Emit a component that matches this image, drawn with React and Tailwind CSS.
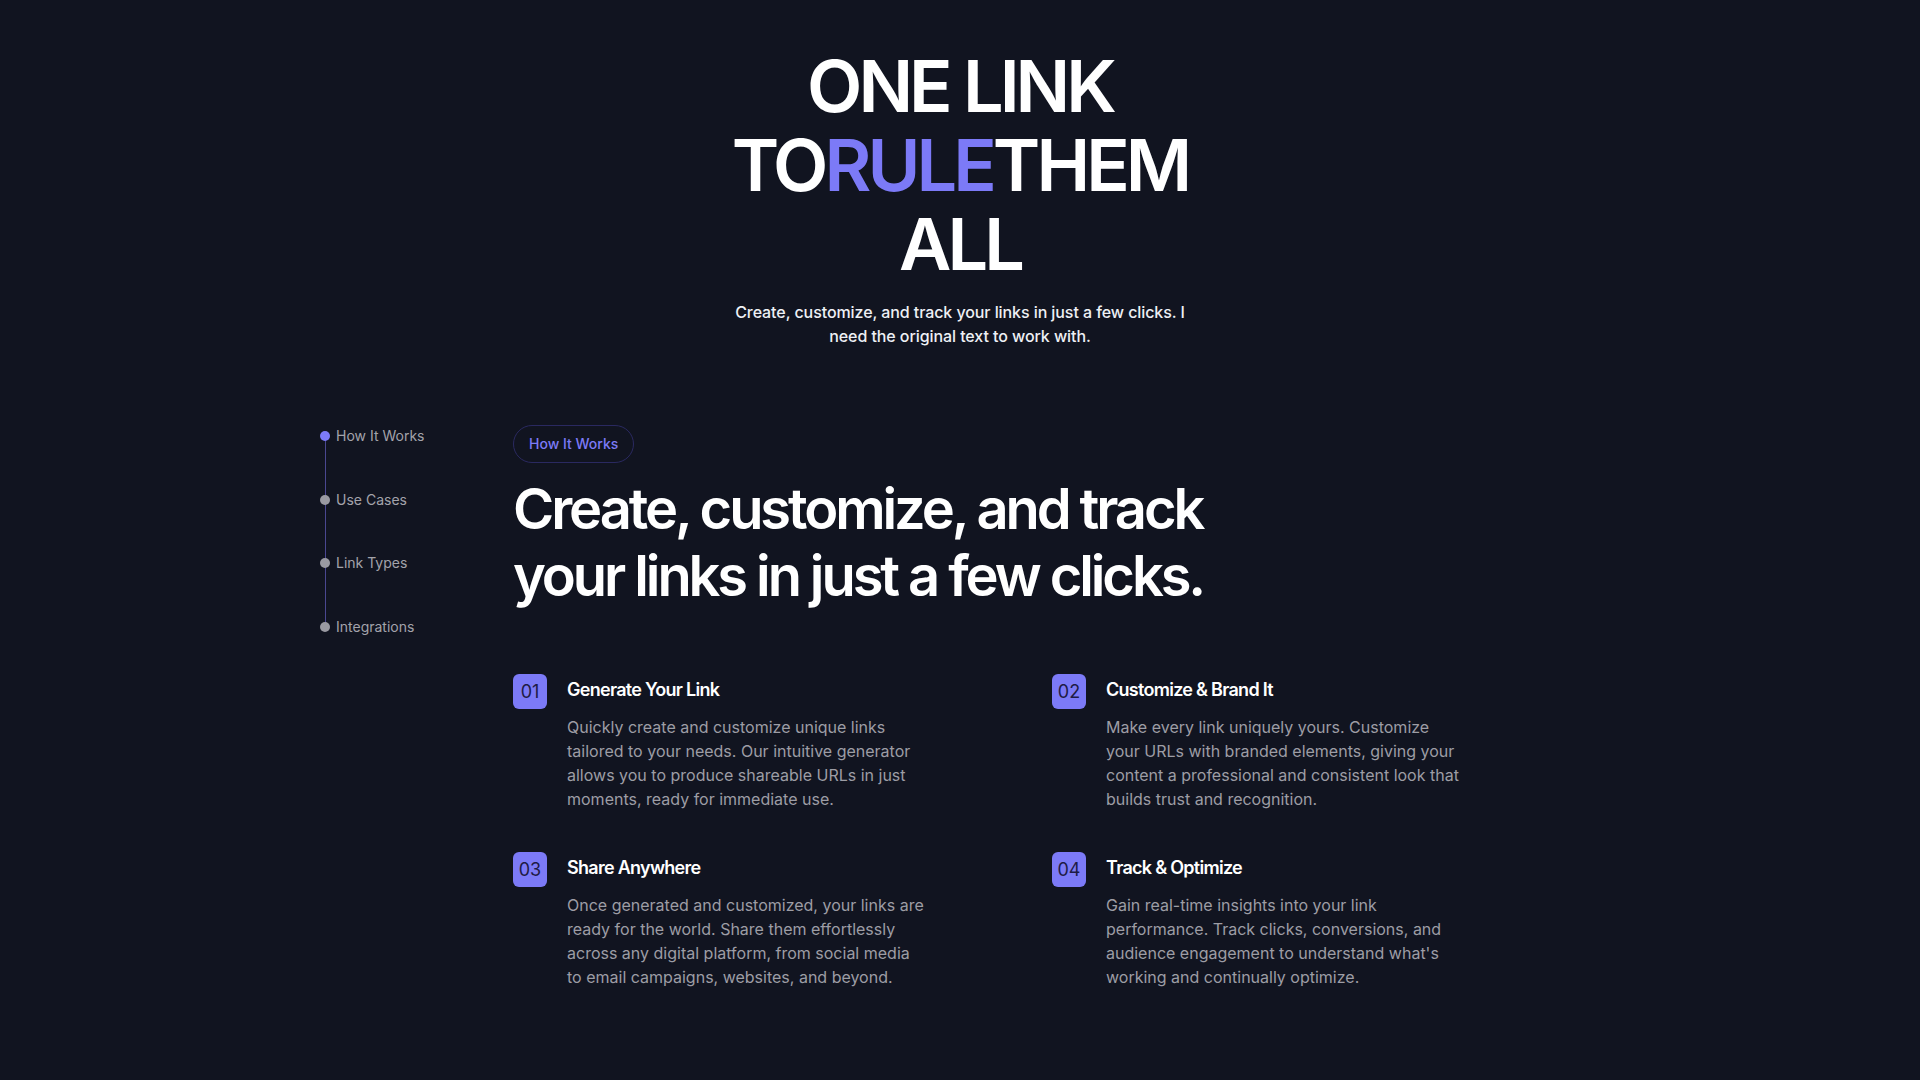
import React from "react";

const navItems = ["How It Works", "Use Cases", "Link Types", "Integrations"];

const steps = [
  {
    num: "01",
    title: "Generate Your Link",
    text: "Quickly create and customize unique links tailored to your needs. Our intuitive generator allows you to produce shareable URLs in just moments, ready for immediate use.",
  },
  {
    num: "02",
    title: "Customize & Brand It",
    text: "Make every link uniquely yours. Customize your URLs with branded elements, giving your content a professional and consistent look that builds trust and recognition.",
  },
  {
    num: "03",
    title: "Share Anywhere",
    text: "Once generated and customized, your links are ready for the world. Share them effortlessly across any digital platform, from social media to email campaigns, websites, and beyond.",
  },
  {
    num: "04",
    title: "Track & Optimize",
    text: "Gain real-time insights into your link performance. Track clicks, conversions, and audience engagement to understand what's working and continually optimize.",
  },
];

const SideNav = () => {
  return (
    <div className="relative w-[193px] shrink-0 pt-[1px]">
      {/* line behind the dots */}
      <div className="absolute left-[5px] top-[11px] h-[191px] w-px bg-[#4a4790]" />
      <div className="flex flex-col gap-[43.6px]">
        {navItems.map((item, i) => (
          <div key={item} className="relative flex items-center gap-[6px] h-5">
            <span
              className={
                i === 0
                  ? "h-[10px] w-[10px] rounded-full bg-[#7c7af7]"
                  : "h-[10px] w-[10px] rounded-full bg-[#9a9aa2]"
              }
            />
            <span className="text-sm text-[#a3a3ab]">{item}</span>
          </div>
        ))}
      </div>
    </div>
  );
};

const Step = ({ num, title, text }) => {
  return (
    <div className="flex items-start gap-5">
      <div className="flex h-[35px] w-[34px] shrink-0 items-center justify-center rounded-md bg-[#7c7af7] text-lg text-[#1e1b45]">
        {num}
      </div>
      <div className="pt-[2px]">
        <h3 className="text-lg leading-7 font-semibold tracking-[-0.04em] text-white">{title}</h3>
        <p className="mt-[11px] w-[358px] text-base leading-6 text-[#9d9da5]">{text}</p>
      </div>
    </div>
  );
};

export default function App() {
  return (
    <div
      className="min-h-screen w-full bg-[#111420] text-white"
      style={{ fontFamily: "Inter, 'Noto Sans', sans-serif" }}
    >
      <div className="flex flex-col items-center pt-[46px]">
        <h1 className="w-[470px] text-center text-[72px] leading-[79px] font-semibold tracking-[-0.055em]">
          ONE LINK TO<span className="text-[#7c7af7]">RULE</span>THEM ALL
        </h1>
        <p className="mt-[17px] w-[456px] text-center text-base leading-6 font-medium tracking-[-0.005em] text-[#eef0f5]">
          Create, customize, and track your links in just a few clicks. I need the original text to work with.
        </p>
      </div>

      <div className="mx-auto mt-[77px] flex w-[1280px] pb-24">
        <SideNav />
        <div className="flex-1">
          <span className="inline-block rounded-full border border-[#2a2960] px-[15px] py-2 text-sm font-medium text-[#7c7af7]">
            How It Works
          </span>
          <h2 className="mt-[13px] text-[56px] leading-[67px] font-semibold tracking-[-0.055em]">
            Create, customize, and track
            <br />
            your links in just a few clicks.
          </h2>
          <div className="mt-[64px] grid w-[1078px] grid-cols-2 gap-y-[41px]">
            {steps.map((s) => (
              <Step key={s.num} {...s} />
            ))}
          </div>
        </div>
      </div>
    </div>
  );
}
